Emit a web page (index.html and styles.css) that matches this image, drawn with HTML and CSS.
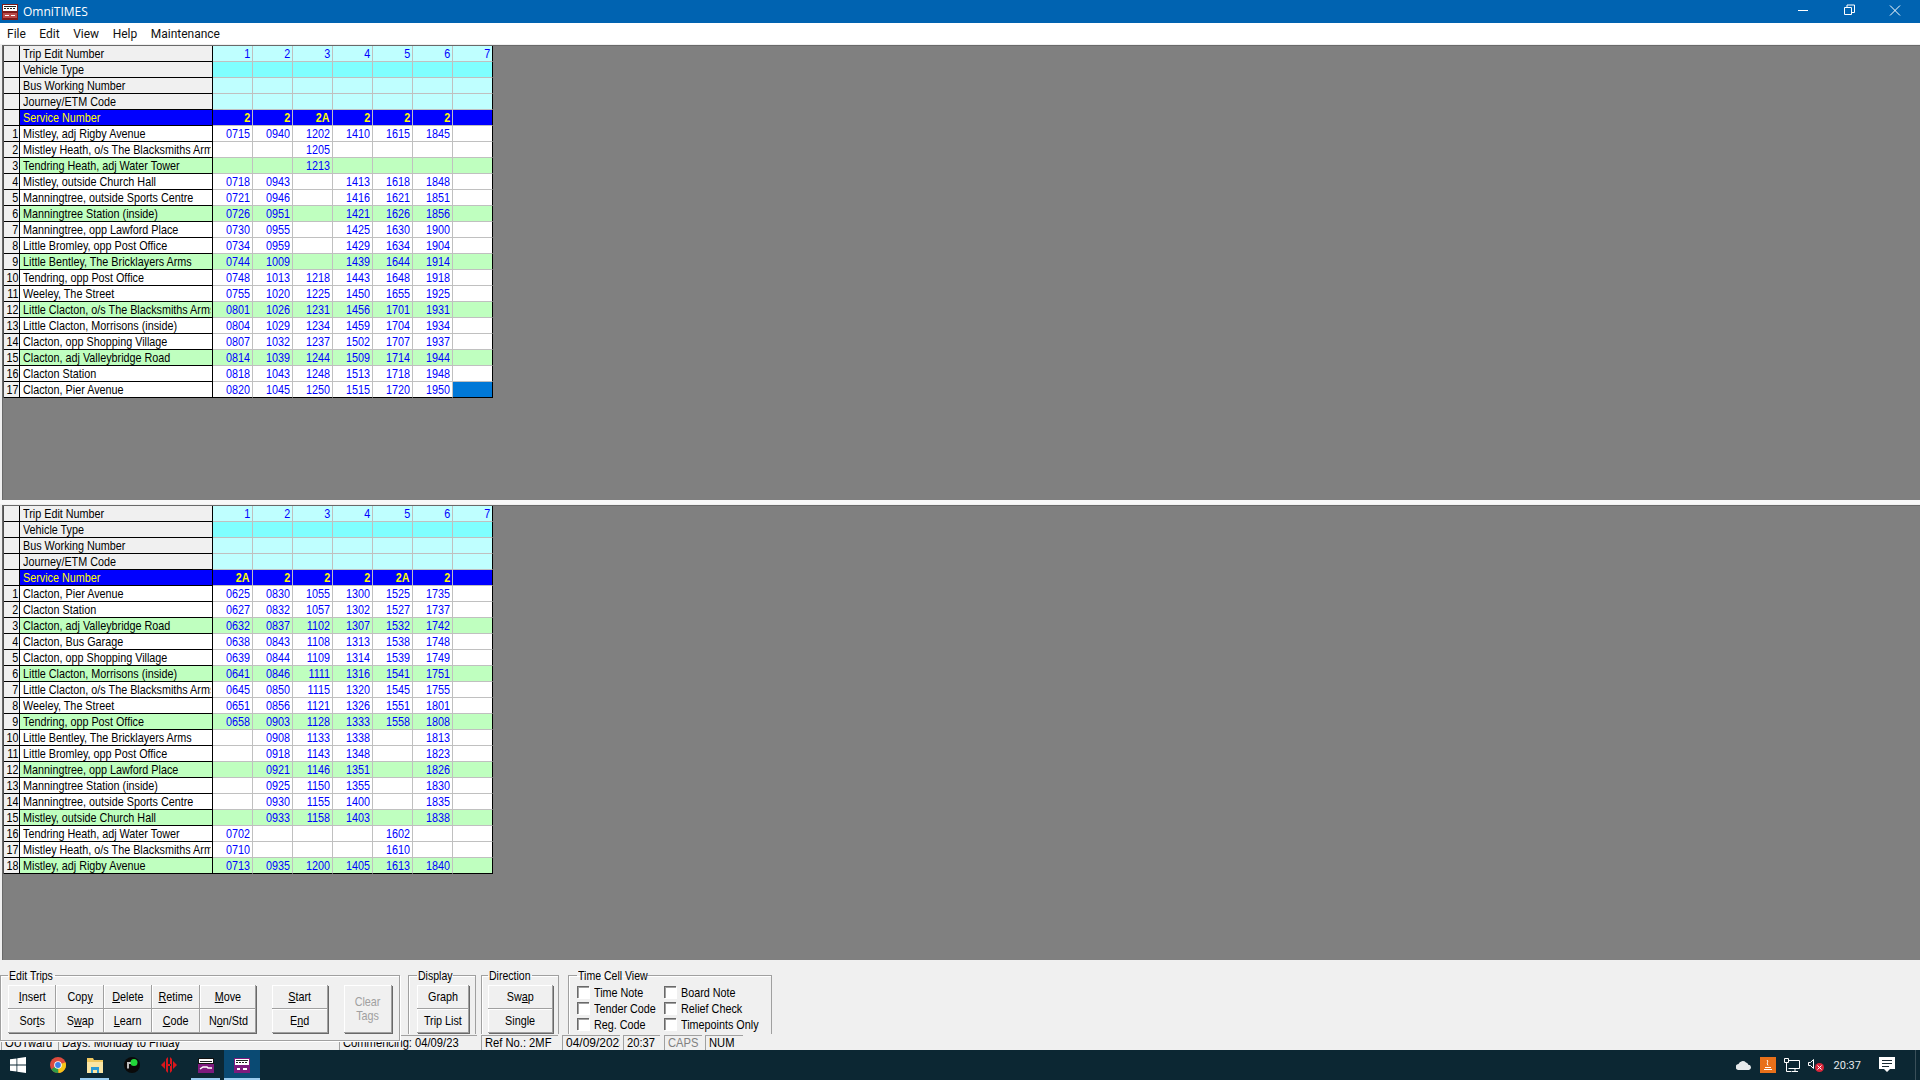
FILE: index.html
```html
<!DOCTYPE html>
<html lang="en">
<head>
<meta charset="utf-8">
<title>OmniTIMES</title>
<link rel="stylesheet" href="styles.css">
</head>
<body>
<div class="app">
  <header class="titlebar">
    <svg class="appicon" width="16" height="16" viewBox="0 0 16 16"><rect width="16" height="16" fill="#7d1c1c"/><rect x="1" y="1" width="14" height="6" fill="#fff"/><path d="M2 2.500h12M2 4.500h2m1 0h2m1 0h2m1 0h2" stroke="#222" stroke-width="1"/><rect x="1" y="9" width="14" height="5" fill="#b94a4a"/><rect x="3" y="11" width="4" height="1" fill="#fff"/><rect x="9" y="11" width="4" height="1" fill="#fff"/></svg>
    <span class="apptitle">OmniTIMES</span>
    <div class="winctl">
      <svg width="46" height="23" viewBox="0 0 46 23"><path d="M18 10.5h10" stroke="#fff"/></svg>
      <svg width="46" height="23" viewBox="0 0 46 23"><path d="M18.500 7.500h7v7h-7zM21 7.500v-2.500h7.500v7.500h-3" fill="none" stroke="#fff"/></svg>
      <svg width="46" height="23" viewBox="0 0 46 23"><path d="M18 5.500l10 10M28 5.500l-10 10" stroke="#fff"/></svg>
    </div>
  </header>
  <nav class="menubar">
    <span>File</span><span>Edit</span><span>View</span><span>Help</span><span>Maintenance</span>
  </nav>
  <main class="panes">
    <section class="pane pane-top">
      <table class="grid">
        <tr class="hd"><th></th><td class="nm"><span>Trip Edit Number</span></td><td><span>1</span></td><td><span>2</span></td><td><span>3</span></td><td><span>4</span></td><td><span>5</span></td><td><span>6</span></td><td><span>7</span></td></tr>
        <tr class="vt"><th></th><td class="nm"><span>Vehicle Type</span></td><td></td><td></td><td></td><td></td><td></td><td></td><td></td></tr>
        <tr class="hd"><th></th><td class="nm"><span>Bus Working Number</span></td><td></td><td></td><td></td><td></td><td></td><td></td><td></td></tr>
        <tr class="hd"><th></th><td class="nm"><span>Journey/ETM Code</span></td><td></td><td></td><td></td><td></td><td></td><td></td><td></td></tr>
        <tr class="sv"><th></th><td class="nm"><span>Service Number</span></td><td><span>2</span></td><td><span>2</span></td><td><span>2A</span></td><td><span>2</span></td><td><span>2</span></td><td><span>2</span></td><td></td></tr>
        <tr><th><span>1</span></th><td class="nm"><span>Mistley, adj Rigby Avenue</span></td><td><span>0715</span></td><td><span>0940</span></td><td><span>1202</span></td><td><span>1410</span></td><td><span>1615</span></td><td><span>1845</span></td><td></td></tr>
        <tr><th><span>2</span></th><td class="nm"><span>Mistley Heath, o/s The Blacksmiths Arms</span></td><td></td><td></td><td><span>1205</span></td><td></td><td></td><td></td><td></td></tr>
        <tr class="g"><th><span>3</span></th><td class="nm"><span>Tendring Heath, adj Water Tower</span></td><td></td><td></td><td><span>1213</span></td><td></td><td></td><td></td><td></td></tr>
        <tr><th><span>4</span></th><td class="nm"><span>Mistley, outside Church Hall</span></td><td><span>0718</span></td><td><span>0943</span></td><td></td><td><span>1413</span></td><td><span>1618</span></td><td><span>1848</span></td><td></td></tr>
        <tr><th><span>5</span></th><td class="nm"><span>Manningtree, outside Sports Centre</span></td><td><span>0721</span></td><td><span>0946</span></td><td></td><td><span>1416</span></td><td><span>1621</span></td><td><span>1851</span></td><td></td></tr>
        <tr class="g"><th><span>6</span></th><td class="nm"><span>Manningtree Station (inside)</span></td><td><span>0726</span></td><td><span>0951</span></td><td></td><td><span>1421</span></td><td><span>1626</span></td><td><span>1856</span></td><td></td></tr>
        <tr><th><span>7</span></th><td class="nm"><span>Manningtree, opp Lawford Place</span></td><td><span>0730</span></td><td><span>0955</span></td><td></td><td><span>1425</span></td><td><span>1630</span></td><td><span>1900</span></td><td></td></tr>
        <tr><th><span>8</span></th><td class="nm"><span>Little Bromley, opp Post Office</span></td><td><span>0734</span></td><td><span>0959</span></td><td></td><td><span>1429</span></td><td><span>1634</span></td><td><span>1904</span></td><td></td></tr>
        <tr class="g"><th><span>9</span></th><td class="nm"><span>Little Bentley, The Bricklayers Arms</span></td><td><span>0744</span></td><td><span>1009</span></td><td></td><td><span>1439</span></td><td><span>1644</span></td><td><span>1914</span></td><td></td></tr>
        <tr><th><span>10</span></th><td class="nm"><span>Tendring, opp Post Office</span></td><td><span>0748</span></td><td><span>1013</span></td><td><span>1218</span></td><td><span>1443</span></td><td><span>1648</span></td><td><span>1918</span></td><td></td></tr>
        <tr><th><span>11</span></th><td class="nm"><span>Weeley, The Street</span></td><td><span>0755</span></td><td><span>1020</span></td><td><span>1225</span></td><td><span>1450</span></td><td><span>1655</span></td><td><span>1925</span></td><td></td></tr>
        <tr class="g"><th><span>12</span></th><td class="nm"><span>Little Clacton, o/s The Blacksmiths Arms</span></td><td><span>0801</span></td><td><span>1026</span></td><td><span>1231</span></td><td><span>1456</span></td><td><span>1701</span></td><td><span>1931</span></td><td></td></tr>
        <tr><th><span>13</span></th><td class="nm"><span>Little Clacton, Morrisons (inside)</span></td><td><span>0804</span></td><td><span>1029</span></td><td><span>1234</span></td><td><span>1459</span></td><td><span>1704</span></td><td><span>1934</span></td><td></td></tr>
        <tr><th><span>14</span></th><td class="nm"><span>Clacton, opp Shopping Village</span></td><td><span>0807</span></td><td><span>1032</span></td><td><span>1237</span></td><td><span>1502</span></td><td><span>1707</span></td><td><span>1937</span></td><td></td></tr>
        <tr class="g"><th><span>15</span></th><td class="nm"><span>Clacton, adj Valleybridge Road</span></td><td><span>0814</span></td><td><span>1039</span></td><td><span>1244</span></td><td><span>1509</span></td><td><span>1714</span></td><td><span>1944</span></td><td></td></tr>
        <tr><th><span>16</span></th><td class="nm"><span>Clacton Station</span></td><td><span>0818</span></td><td><span>1043</span></td><td><span>1248</span></td><td><span>1513</span></td><td><span>1718</span></td><td><span>1948</span></td><td></td></tr>
        <tr class="last"><th><span>17</span></th><td class="nm"><span>Clacton, Pier Avenue</span></td><td><span>0820</span></td><td><span>1045</span></td><td><span>1250</span></td><td><span>1515</span></td><td><span>1720</span></td><td><span>1950</span></td><td class="sel"></td></tr>
      </table>
    </section>
    <div class="splitter"></div>
    <section class="pane pane-bottom">
      <table class="grid">
        <tr class="hd"><th></th><td class="nm"><span>Trip Edit Number</span></td><td><span>1</span></td><td><span>2</span></td><td><span>3</span></td><td><span>4</span></td><td><span>5</span></td><td><span>6</span></td><td><span>7</span></td></tr>
        <tr class="vt"><th></th><td class="nm"><span>Vehicle Type</span></td><td></td><td></td><td></td><td></td><td></td><td></td><td></td></tr>
        <tr class="hd"><th></th><td class="nm"><span>Bus Working Number</span></td><td></td><td></td><td></td><td></td><td></td><td></td><td></td></tr>
        <tr class="hd"><th></th><td class="nm"><span>Journey/ETM Code</span></td><td></td><td></td><td></td><td></td><td></td><td></td><td></td></tr>
        <tr class="sv"><th></th><td class="nm"><span>Service Number</span></td><td><span>2A</span></td><td><span>2</span></td><td><span>2</span></td><td><span>2</span></td><td><span>2A</span></td><td><span>2</span></td><td></td></tr>
        <tr><th><span>1</span></th><td class="nm"><span>Clacton, Pier Avenue</span></td><td><span>0625</span></td><td><span>0830</span></td><td><span>1055</span></td><td><span>1300</span></td><td><span>1525</span></td><td><span>1735</span></td><td></td></tr>
        <tr><th><span>2</span></th><td class="nm"><span>Clacton Station</span></td><td><span>0627</span></td><td><span>0832</span></td><td><span>1057</span></td><td><span>1302</span></td><td><span>1527</span></td><td><span>1737</span></td><td></td></tr>
        <tr class="g"><th><span>3</span></th><td class="nm"><span>Clacton, adj Valleybridge Road</span></td><td><span>0632</span></td><td><span>0837</span></td><td><span>1102</span></td><td><span>1307</span></td><td><span>1532</span></td><td><span>1742</span></td><td></td></tr>
        <tr><th><span>4</span></th><td class="nm"><span>Clacton, Bus Garage</span></td><td><span>0638</span></td><td><span>0843</span></td><td><span>1108</span></td><td><span>1313</span></td><td><span>1538</span></td><td><span>1748</span></td><td></td></tr>
        <tr><th><span>5</span></th><td class="nm"><span>Clacton, opp Shopping Village</span></td><td><span>0639</span></td><td><span>0844</span></td><td><span>1109</span></td><td><span>1314</span></td><td><span>1539</span></td><td><span>1749</span></td><td></td></tr>
        <tr class="g"><th><span>6</span></th><td class="nm"><span>Little Clacton, Morrisons (inside)</span></td><td><span>0641</span></td><td><span>0846</span></td><td><span>1111</span></td><td><span>1316</span></td><td><span>1541</span></td><td><span>1751</span></td><td></td></tr>
        <tr><th><span>7</span></th><td class="nm"><span>Little Clacton, o/s The Blacksmiths Arms</span></td><td><span>0645</span></td><td><span>0850</span></td><td><span>1115</span></td><td><span>1320</span></td><td><span>1545</span></td><td><span>1755</span></td><td></td></tr>
        <tr><th><span>8</span></th><td class="nm"><span>Weeley, The Street</span></td><td><span>0651</span></td><td><span>0856</span></td><td><span>1121</span></td><td><span>1326</span></td><td><span>1551</span></td><td><span>1801</span></td><td></td></tr>
        <tr class="g"><th><span>9</span></th><td class="nm"><span>Tendring, opp Post Office</span></td><td><span>0658</span></td><td><span>0903</span></td><td><span>1128</span></td><td><span>1333</span></td><td><span>1558</span></td><td><span>1808</span></td><td></td></tr>
        <tr><th><span>10</span></th><td class="nm"><span>Little Bentley, The Bricklayers Arms</span></td><td></td><td><span>0908</span></td><td><span>1133</span></td><td><span>1338</span></td><td></td><td><span>1813</span></td><td></td></tr>
        <tr><th><span>11</span></th><td class="nm"><span>Little Bromley, opp Post Office</span></td><td></td><td><span>0918</span></td><td><span>1143</span></td><td><span>1348</span></td><td></td><td><span>1823</span></td><td></td></tr>
        <tr class="g"><th><span>12</span></th><td class="nm"><span>Manningtree, opp Lawford Place</span></td><td></td><td><span>0921</span></td><td><span>1146</span></td><td><span>1351</span></td><td></td><td><span>1826</span></td><td></td></tr>
        <tr><th><span>13</span></th><td class="nm"><span>Manningtree Station (inside)</span></td><td></td><td><span>0925</span></td><td><span>1150</span></td><td><span>1355</span></td><td></td><td><span>1830</span></td><td></td></tr>
        <tr><th><span>14</span></th><td class="nm"><span>Manningtree, outside Sports Centre</span></td><td></td><td><span>0930</span></td><td><span>1155</span></td><td><span>1400</span></td><td></td><td><span>1835</span></td><td></td></tr>
        <tr class="g"><th><span>15</span></th><td class="nm"><span>Mistley, outside Church Hall</span></td><td></td><td><span>0933</span></td><td><span>1158</span></td><td><span>1403</span></td><td></td><td><span>1838</span></td><td></td></tr>
        <tr><th><span>16</span></th><td class="nm"><span>Tendring Heath, adj Water Tower</span></td><td><span>0702</span></td><td></td><td></td><td></td><td><span>1602</span></td><td></td><td></td></tr>
        <tr><th><span>17</span></th><td class="nm"><span>Mistley Heath, o/s The Blacksmiths Arms</span></td><td><span>0710</span></td><td></td><td></td><td></td><td><span>1610</span></td><td></td><td></td></tr>
        <tr class="g last"><th><span>18</span></th><td class="nm"><span>Mistley, adj Rigby Avenue</span></td><td><span>0713</span></td><td><span>0935</span></td><td><span>1200</span></td><td><span>1405</span></td><td><span>1613</span></td><td><span>1840</span></td><td></td></tr>
      </table>
    </section>
  </main>
  <section class="toolbar">
    <fieldset class="group edit">
      <legend><span>Edit Trips</span></legend>
      <div class="btngrid five">
        <button><span><u>I</u>nsert</span></button><button><span>Cop<u>y</u></span></button><button><span><u>D</u>elete</span></button><button><span><u>R</u>etime</span></button><button><span><u>M</u>ove</span></button>
        <button><span>Sor<u>t</u>s</span></button><button><span>S<u>w</u>ap</span></button><button><span><u>L</u>earn</span></button><button><span><u>C</u>ode</span></button><button><span>N<u>o</u>n/Std</span></button>
      </div>
      <div class="btngrid one">
        <button><span><u>S</u>tart</span></button>
        <button><span>E<u>n</u>d</span></button>
      </div>
      <button class="clear" disabled><span>Clear<br>Tags</span></button>
    </fieldset>
    <fieldset class="group open display">
      <legend><span>Display</span></legend>
      <div class="btngrid one"><button><span>Graph</span></button><button><span>Trip List</span></button></div>
    </fieldset>
    <fieldset class="group open direction">
      <legend><span>Direction</span></legend>
      <div class="btngrid one"><button><span>Sw<u>a</u>p</span></button><button><span>Single</span></button></div>
    </fieldset>
    <fieldset class="group open cellview">
      <legend><span>Time Cell View</span></legend>
      <div class="checks">
        <label class="chk"><i></i><span>Time Note</span></label><label class="chk"><i></i><span>Board Note</span></label>
        <label class="chk"><i></i><span>Tender Code</span></label><label class="chk"><i></i><span>Relief Check</span></label>
        <label class="chk"><i></i><span>Reg. Code</span></label><label class="chk"><i></i><span>Timepoints Only</span></label>
      </div>
    </fieldset>
  </section>
  <footer class="statusbar">
    <div class="st s1"><span>OUTward</span></div>
    <div class="st s2"><span>Days: Monday to Friday</span></div>
    <div class="st s3"><span>Commencing: 04/09/23</span></div>
    <div class="st s4"><span>Ref No.: 2MF</span></div>
    <div class="st s5"><span>04/09/2023</span></div>
    <div class="st s6"><span>20:37</span></div>
    <div class="st s7"><span>CAPS</span></div>
    <div class="st s8"><span>NUM</span></div>
  </footer>
  <div class="taskbar">
    <div class="tb start"><svg width="16" height="16" viewBox="0 0 16 16"><path d="M0 2.300l6.500-.9v6.200H0zM7.300 1.300L16 0v7.600H7.300zM0 8.400h6.500v6.200L0 13.700zM7.300 8.400H16V16l-8.700-1.300z" fill="#fff"/></svg></div>
    <div class="tb"><svg width="16" height="16" viewBox="0 0 16 16"><circle cx="8" cy="8" r="8" fill="#dd4b3e"/><path d="M8 8L1.200 12.300A8 8 0 0 0 8.500 16z" fill="#2f9e47"/><path d="M8 8l7.500-2.800A8 8 0 0 1 8.500 16z" fill="#f5c518"/><circle cx="8" cy="8" r="3.800" fill="#fff"/><circle cx="8" cy="8" r="2.900" fill="#3f7fe8"/></svg></div>
    <div class="tb on"><svg width="16" height="15" viewBox="0 0 16 15"><path d="M0 0h6l1 2h9v13H0z" fill="#f0c860"/><rect x="0" y="4" width="16" height="11" fill="#fbe5a4"/><path d="M4 15V9h8v6h-2v-3H6v3z" fill="#2c9ad6"/></svg></div>
    <div class="tb"><svg width="16" height="16" viewBox="0 0 16 16"><circle cx="8" cy="8" r="8" fill="#0a0a0a"/><path d="M4 11.500V6h4" fill="none" stroke="#bbb" stroke-width="2"/><circle cx="10" cy="5.500" r="3.500" fill="#22d83a"/></svg></div>
    <div class="tb"><svg width="16" height="16" viewBox="0 0 16 16"><path d="M0 8l4-4v8zM16 8l-4-4v8z" fill="#d8161c"/><path d="M5 2l2-2v16l-2-2zM11 2L9 0v16l2-2zM6 7h4v2H6z" fill="#d8161c"/></svg></div>
    <div class="tb on"><svg width="16" height="15" viewBox="0 0 16 15"><rect width="16" height="15" fill="#7d1a7d"/><rect y="0" width="16" height="6" fill="#111"/><rect x="1" y="1" width="14" height="4" fill="#fff"/><path d="M2 3.500h12" stroke="#222"/><path d="M2 11l3-2h4l1 1h4" stroke="#fff" stroke-width="1.500" fill="none"/></svg></div>
    <div class="tb active on"><svg width="16" height="15" viewBox="0 0 16 15"><rect width="16" height="15" fill="#7d1a7d"/><rect x="1" y="1" width="14" height="6" fill="#fff"/><path d="M2 2.500h12M2 4.500h2m1 0h2m1 0h2m1 0h2" stroke="#222"/><path d="M3 11h3M9 11h4" stroke="#fff" stroke-width="2"/></svg></div>
    <div class="tray">
      <svg width="16" height="10" viewBox="0 0 16 10"><path d="M3 10a3 3 0 0 1-.500-6A4.500 4.500 0 0 1 10 2.500a3 3 0 0 1 2.300 2.200A2.700 2.700 0 0 1 13 10z" fill="#e6eaec"/></svg>
      <svg width="16" height="16" viewBox="0 0 16 16"><rect width="16" height="16" fill="#e8701a"/><path d="M4 12.500h8M5 10.500h6M7 3c2 1.500-1 3 1 5.500" stroke="#fff" fill="none"/></svg>
      <svg width="16" height="15" viewBox="0 0 16 15"><path d="M4.500 2.500h11v8h-11M8 13.500h6M11 10.500v3M.5.500h4v4h-4zM2.500 4.500v9h5" fill="none" stroke="#fff"/></svg>
      <svg width="16" height="14" viewBox="0 0 16 14"><path d="M.5 4.500h2l3-3v9l-3-3h-2z" fill="none" stroke="#fff"/><circle cx="11.500" cy="9.500" r="4.500" fill="#d9263a"/><path d="M9.500 7.500l4 4M13.500 7.500l-4 4" stroke="#fff"/></svg>
      <span class="clock">20:37</span>
      <svg class="notif" width="16" height="16" viewBox="0 0 16 16"><path d="M0 0h16v12h-5l-3 3-3-3H0z" fill="#fff"/><path d="M3 3.500h10M3 6.500h10M3 9.500h7" stroke="#1b2b33"/></svg>
      <i class="showdesk"></i>
    </div>
  </div>
</div>
</body>
</html>
```

FILE: styles.css
```css
* { box-sizing: border-box; }
html, body { margin: 0; padding: 0; }
body {
  width: 1920px;
  height: 1080px;
  overflow: hidden;
  font-family: "Liberation Sans", Arial, sans-serif;
  font-size: 13px;
  color: #000;
  background: #f0f0f0;
}
.app { display: flex; flex-direction: column; height: 1080px; }

.titlebar {
  height: 23px;
  background: #0063b1;
  color: #fff;
  display: flex;
  align-items: center;
  padding-left: 2px;
  flex: none;
}
.appicon { margin-right: 5px; }
.apptitle { font: 12px "Open Sans", sans-serif; }
.winctl { margin-left: auto; display: flex; margin-right: 2px; }
.winctl svg { display: block; }

.menubar {
  height: 21px;
  background: #fff;
  display: flex;
  align-items: center;
  flex: none;
  padding-left: 7px;
  gap: 13.5px;
  font: 12px Roboto, sans-serif;
  color: #111;
}

.panes { flex: none; height: 916px; display: flex; flex-direction: column; }
.pane {
  background: #808080;
  border-top: 1px solid #f0f0f0;
  border-left: 2px solid #f0f0f0;
  padding-top: 1px;
  box-shadow: inset 1px 1px 0 #696969;
}
.pane-top { height: 456px; }
.pane-bottom { height: 456px; }
.splitter { height: 4px; background: #f8f8f8; }

.grid {
  border-collapse: separate;
  border-spacing: 0;
  table-layout: fixed;
  width: 490px;
  margin-left: 1px;
  border-left: 1px solid #505050;
  background: #fff;
}
.grid tr { height: 16px; }
.grid th, .grid td {
  height: 16px;
  padding: 0 2px 0 0;
  font-weight: normal;
  line-height: 15px;
  font-size: 13px;
  white-space: nowrap;
  overflow: hidden;
  border-bottom: 1px solid #c0c0c0;
  border-right: 1px solid #c0c0c0;
  color: #0000ff;
  text-align: right;
  width: 40px;
}
.grid span {
  display: inline-block;
  transform: scaleX(.83);
  transform-origin: right center;
}
.grid th {
  width: 16px;
  background: #f0f0f0;
  color: #000;
  border-right: 1px solid #000;
  border-bottom: 1px solid #000;
  padding-right: 1px;
}
.grid .nm {
  width: 193px;
  color: #000;
  text-align: left;
  padding: 0 0 0 3px;
  border-right: 1px solid #000;
  border-bottom: 1px solid #000;
}
.grid .nm span {
  display: block;
  width: 226px;
  overflow: hidden;
  transform-origin: left center;
}
.grid td:last-child { border-right: 1px solid #000; }
.hd td { background: #bfffff; }
.vt td { background: #7fffff; }
.hd .nm, .vt .nm { background: #f0f0f0; }
.sv td { background: #0000ff; color: #ffff00; font-weight: bold; }
.grid .sv .nm { background: #0000ff; color: #ffff00; font-weight: normal; }
.g td { background: #bfffbf; }
.grid .last td, .grid .last th { border-bottom: 1px solid #000; }
.grid .sel { background: #0078d7; }

.toolbar {
  flex: none;
  height: 74px;
  display: flex;
  padding-top: 9px;
  align-items: flex-start;
  position: relative;
  z-index: 1;
}
.group {
  margin: 0;
  padding: 0;
  min-width: 0;
  border: 1px solid #a0a0a0;
  box-shadow: 1px 1px 0 #fff, inset 1px 1px 0 #fff;
  background: transparent;
  display: flex;
}
.group legend { padding: 0 1px; margin-left: 0; line-height: 13px; font-size: 13px; white-space: nowrap; }
.group legend span { display: block; transform: scaleX(.81); transform-origin: left center; }
.edit { width: 400px; height: 72px; padding: 3px 0 0 7px; background: #f0f0f0; }
.edit legend { width: 47px; }
.open { border-bottom: 0; height: 65px; box-shadow: inset 1px 1px 0 #fff; }
.display { width: 68px; margin-left: 8px; padding: 3px 0 0 8px; }
.display legend { width: 36px; }
.direction { width: 78px; margin-left: 5px; padding: 3px 0 0 6px; }
.direction legend { width: 44px; }
.cellview { width: 204px; margin-left: 9px; padding: 2px 0 0 8px; }
.cellview legend { width: 70px; }

.btngrid { display: grid; grid-auto-rows: 24px; }
.five { grid-template-columns: 48px 48px 48px 48px 56px; }
.edit .one { grid-template-columns: 56px; margin-left: 16px; }
.display .one { grid-template-columns: 52px; }
.direction .one { grid-template-columns: 65px; }

button {
  font: inherit;
  color: #000;
  background: #f0f0f0;
  padding: 0 0 0 1px;
  border: 0;
  border-right: 1px solid #a0a0a0;
  border-bottom: 1px solid #a0a0a0;
  box-shadow: inset 1px 1px 0 #fff, 1px 1px 0 #696969;
  line-height: 14px;
  white-space: nowrap;
}
button span { display: inline-block; transform: scaleX(.83); }
.clear {
  width: 48px;
  height: 48px;
  margin-left: 16px;
  color: #a0a0a0;
}

.checks {
  display: grid;
  grid-template-columns: 87px 100px;
  grid-auto-rows: 16px;
}
.chk { display: flex; align-items: center; white-space: nowrap; }
.chk span { display: block; width: 88px; transform: scaleX(.83); transform-origin: left center; }
.chk i {
  width: 12px;
  height: 12px;
  background: #fff;
  border-top: 1px solid #696969;
  border-left: 1px solid #696969;
  box-shadow: inset 1px 1px 0 #a0a0a0, 1px 1px 0 #fff;
  margin-right: 5px;
  flex: none;
}

.statusbar {
  flex: none;
  height: 16px;
  display: flex;
  background: #f0f0f0;
  padding-top: 1px;
  font-size: 13px;
  line-height: 14px;
  overflow: hidden;
}
.st {
  overflow: hidden;
  white-space: nowrap;
  padding-left: 3px;
  border-left: 1px solid #a0a0a0;
  border-top: 1px solid #a0a0a0;
  margin-right: 1px;
}
.st span { display: inline-block; transform: scaleX(.86); transform-origin: left center; }
.s1 { width: 56px; margin-left: 1px; }
.s2 { width: 280px; }
.s3 { width: 138px; margin-right: 4px; }
.s4 { width: 77px; margin-right: 4px; }
.s5 { width: 58px; margin-right: 3px; }
.s5 span { transform: scaleX(.92); }
.s6 { width: 37px; margin-right: 4px; }
.s7 { width: 38px; margin-right: 3px; color: #808080; }
.s8 { width: 38px; }

.taskbar {
  flex: none;
  height: 30px;
  background: #0c2733;
  display: flex;
  align-items: stretch;
  color: #fff;
}
.tb {
  width: 37px;
  display: flex;
  align-items: center;
  justify-content: center;
  border-bottom: 2px solid transparent;
  padding-top: 2px;
}
.tb.start { width: 39px; justify-content: flex-start; padding-left: 10px; }
.tb.on { border-bottom-color: #99ccf0; margin: 0 4px; width: 29px; }
.tb.on.active { background: #0a4a73; width: 36px; margin: 0; }
.tray {
  margin-left: auto;
  display: flex;
  align-items: center;
  gap: 8px;
}
.clock { font: 11px Roboto, sans-serif; margin-left: 2px; color: #e6eaec; }
.notif { margin-left: 10px; }
.showdesk { display: block; width: 1px; height: 30px; background: #3a4f59; margin-left: 12px; margin-right: 4px; }
```
